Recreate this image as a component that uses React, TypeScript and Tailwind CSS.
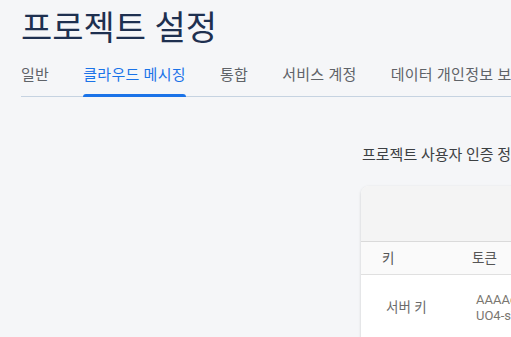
const tabs = ['일반', '클라우드 메시징', '통합', '서비스 계정', '데이터 개인정보 보호', '사용자 및 권한']

export default function App() {
  return (
    <div className="w-[511px] h-[337px] overflow-hidden bg-[#f5f6f8] font-['Roboto','Noto_Sans_CJK_KR',sans-serif]">
      <header className="pl-[21px]">
        <h1 className="pt-[8px] text-[34px] leading-[40px] text-[#1e3050] whitespace-nowrap">프로젝트 설정</h1>
        <nav className="mt-[10px] flex gap-[34px] border-b border-[#c6d3e1] whitespace-nowrap">
          {tabs.map((tab, i) => (
            <div
              key={tab}
              className={
                'relative h-[38px] pb-[4px] flex items-center text-[15px] tracking-[0.3px] ' +
                (i === 1 ? 'text-[#1a73e8]' : 'text-[#5f6368]')
              }
            >
              {tab}
              {i === 1 && (
                <span className="absolute left-0 right-0 -bottom-[1px] h-[3px] rounded-t-[3px] bg-[#1a73e8]"></span>
              )}
            </div>
          ))}
        </nav>
      </header>

      <main className="flex">
        <div className="w-[361px] shrink-0"></div>
        <section className="flex flex-col">
          <p className="mt-[48px] pl-[1px] text-[15px] leading-[20px] text-[#3c4043] whitespace-nowrap">
            프로젝트 사용자 인증 정보
          </p>
          <div className="mt-[21px] w-[600px] rounded-tl-[8px] bg-white shadow-[0_1px_3px_rgba(0,0,0,0.18)] overflow-hidden">
            <div className="h-[56px] bg-[#f4f4f4] border-b border-[#dadada]"></div>
            <div className="flex h-[33px] items-center bg-[#fafafa] border-b border-[#e0e0e0] text-[13.5px] text-[#555]">
              <span className="w-[111px] pl-[21px]">키</span>
              <span>토큰</span>
            </div>
            <div className="flex items-center h-[65px] text-[13px]">
              <span className="w-[90px] pl-[25px] text-[13.5px] text-[#6b6b6b]">서버 키</span>
              <span className="pl-[25px] flex flex-col leading-[16px] text-[#7a7670] whitespace-nowrap">
                <span>AAAAcX9kQ2E:APA91bHfR2dL7sKq0Zx</span>
                <span>UO4-sTn8WcYbJ1vA3mEoPq</span>
              </span>
            </div>
          </div>
        </section>
      </main>
    </div>
  )
}
